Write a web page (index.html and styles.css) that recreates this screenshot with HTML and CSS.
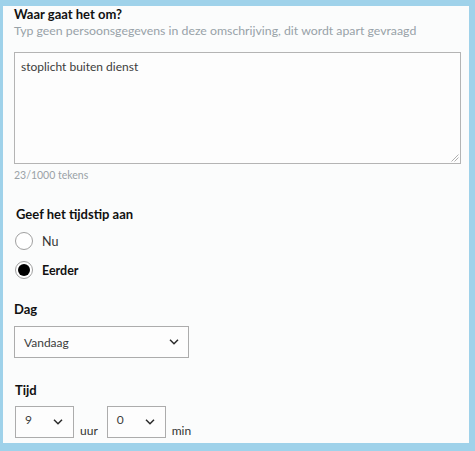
FILE: index.html
```html
<!DOCTYPE html>
<html lang="nl">
<head>
<meta charset="utf-8">
<link rel="stylesheet" href="styles.css">
</head>
<body>
<div class="frame">
  <div class="panel">
    <div class="label title">Waar gaat het om?</div>
    <div class="hint">Typ geen persoonsgegevens in deze omschrijving, dit wordt apart gevraagd</div>
    <div class="textarea">
      <span class="value">stoplicht buiten dienst</span>
      <svg class="grip" width="9" height="9" viewBox="0 0 9 9"><path d="M8.5 1.5 L1.5 8.5 M8.5 4.5 L4.5 8.5" stroke="#b0b0b0" stroke-width="1" fill="none"/></svg>
    </div>
    <div class="counter">23/1000 tekens</div>

    <div class="label when">Geef het tijdstip aan</div>
    <div class="radio-row first">
      <span class="radio"></span><span class="radio-label">Nu</span>
    </div>
    <div class="radio-row">
      <span class="radio checked"></span><span class="radio-label bold">Eerder</span>
    </div>

    <div class="label day">Dag</div>
    <div class="select wide">
      <span>Vandaag</span>
      <svg class="chev" width="10" height="6" viewBox="0 0 10 6"><path d="M1 0.8 L5 4.8 L9 0.8" stroke="#2a2a2a" stroke-width="1.5" fill="none"/></svg>
    </div>

    <div class="label clock">Tijd</div>
    <div class="time-row">
      <div class="select small">
        <span class="num">9</span>
        <svg class="chev" width="10" height="6" viewBox="0 0 10 6"><path d="M1 0.8 L5 4.8 L9 0.8" stroke="#2a2a2a" stroke-width="1.5" fill="none"/></svg>
      </div>
      <span class="unit">uur</span>
      <div class="select small">
        <span class="num">0</span>
        <svg class="chev" width="10" height="6" viewBox="0 0 10 6"><path d="M1 0.8 L5 4.8 L9 0.8" stroke="#2a2a2a" stroke-width="1.5" fill="none"/></svg>
      </div>
      <span class="unit">min</span>
    </div>
  </div>
</div>
</body>
</html>
```
FILE: styles.css
```css
html, body {
  margin: 0;
  padding: 0;
}
body {
  width: 475px;
  height: 451px;
  background: #9fd2ea;
  font-family: "Lato", "Open Sans", sans-serif;
  color: #1b1b1b;
  overflow: hidden;
}
.frame {
  padding: 6px 6px 8px 3px;
  height: 451px;
  box-sizing: border-box;
}
.panel {
  background: #fbfcfc;
  height: 437px;
  box-sizing: border-box;
  padding: 0 0 0 11px;
  display: flex;
  flex-direction: column;
  align-items: flex-start;
}
.label {
  font-weight: 700;
  font-size: 13px;
  line-height: 14px;
  color: #111;
}
.title {
  margin-top: 1px;
}
.hint {
  margin-top: 2px;
  font-size: 12.3px;
  line-height: 15px;
  color: #98a2a8;
}
.textarea {
  position: relative;
  margin-top: 14px;
  width: 447px;
  height: 112px;
  box-sizing: border-box;
  border: 1px solid #b4b4b4;
  background: #fdfdfd;
  padding: 4px 6px;
  line-height: 15px;
}
.value {
  font-size: 12px;
  color: #3c3c3c;
}
.grip {
  position: absolute;
  right: 1px;
  bottom: 1px;
}
.counter {
  margin-top: 5px;
  font-size: 10.5px;
  line-height: 13px;
  color: #9aa2a7;
}
.when {
  margin-top: 25px;
  margin-left: 2px;
}
.radio-row {
  display: flex;
  align-items: center;
  height: 18px;
  margin-top: 11px;
  margin-left: 1px;
}
.radio {
  width: 16px;
  height: 16px;
  border: 1px solid #a0a0a0;
  border-radius: 50%;
  background: #fff;
  position: relative;
}
.radio.checked::after {
  content: "";
  position: absolute;
  left: 2px;
  top: 2px;
  width: 12px;
  height: 12px;
  border-radius: 50%;
  background: #000;
}
.radio-label {
  margin-left: 9px;
  font-size: 12.5px;
  color: #333;
}
.radio-label.bold {
  font-weight: 700;
  color: #111;
}
.day {
  margin-top: 23px;
}
.select {
  display: flex;
  align-items: center;
  justify-content: space-between;
  border: 1px solid #acacac;
  background: #fdfdfd;
  box-sizing: border-box;
  height: 32px;
  font-size: 12px;
  color: #3c3c3c;
}
.select.wide {
  width: 175px;
  margin-top: 10px;
  padding: 0 9px 0 9px;
}
.clock {
  margin-top: 25px;
  margin-left: 1px;
}
.time-row {
  display: flex;
  align-items: flex-end;
  margin-top: 9px;
  margin-left: 1px;
}
.select.small {
  width: 59px;
  padding: 0 10px 0 9px;
}
.num {
  position: relative;
  top: -3px;
}
.unit {
  font-size: 12px;
  line-height: 15px;
  color: #333;
  margin: 0 9px 0 6px;
}
.unit:last-child {
  margin-right: 0;
}
```
